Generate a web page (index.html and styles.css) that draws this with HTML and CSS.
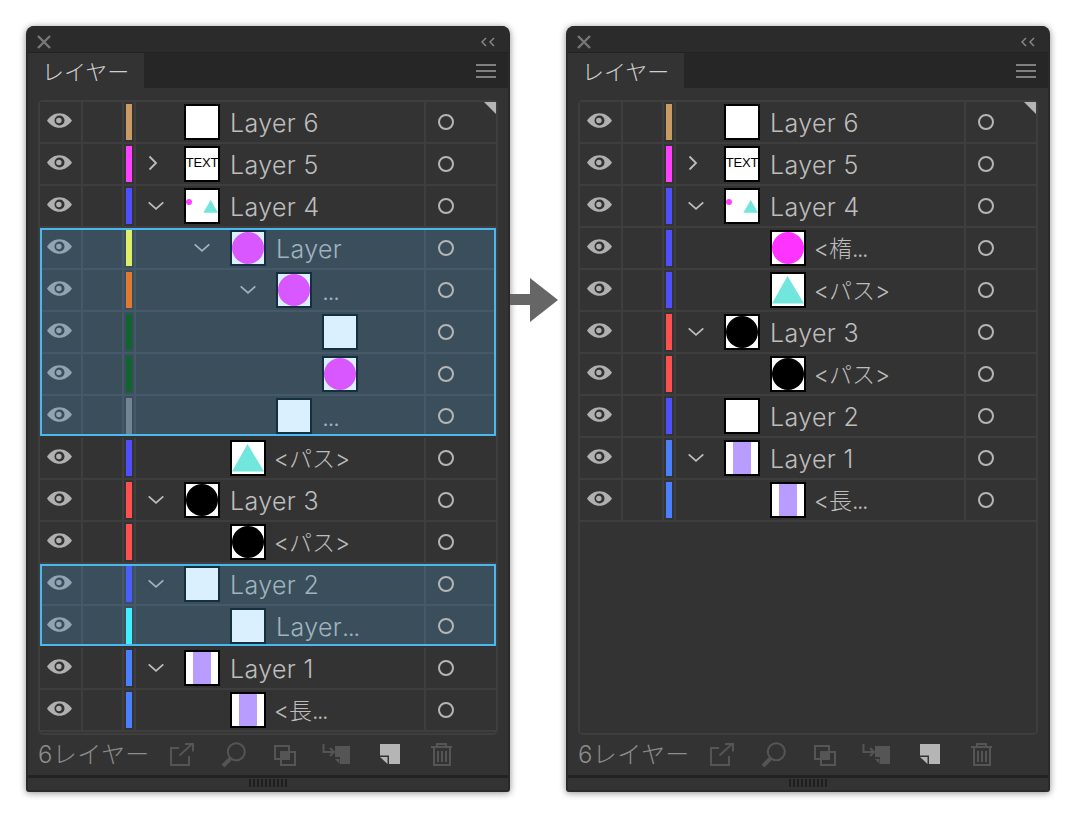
FILE: index.html
```html
<!DOCTYPE html>
<html lang="ja">

<head>
    <meta charset="UTF-8">
    <title>レイヤー</title>
    <link rel="stylesheet" href="styles.css">
</head>

<body>
    <svg class="defs" width="0" height="0">
        <symbol id="eye" viewBox="0 0 24 14">
            <path fill-rule="evenodd" d="M0 7C3 2.600 7.200 0 12 0s9 2.600 12 7c-3 4.400-7.200 7-12 7S3 11.400 0 7zM12 2.200a4.800 4.800 0 1 0 0 9.600 4.800 4.800 0 0 0 0-9.600z"/>
            <circle cx="11.400" cy="7" r="2.600"/>
        </symbol>
        <symbol id="down" viewBox="0 0 16 10">
            <path d="M.7 1.300L8 7.800l7.300-6.500" fill="none" stroke="currentColor" stroke-width="1.800"/>
        </symbol>
        <symbol id="right" viewBox="0 0 16 16">
            <path d="M4.500 1.500l6.500 6.500-6.500 6.500" fill="none" stroke="currentColor" stroke-width="1.800"/>
        </symbol>
        <symbol id="circle" viewBox="0 0 32 32"><circle cx="16" cy="16" r="16"/></symbol>
        <symbol id="triangle" viewBox="0 0 32 32"><path d="M15.500 2L32 29.500H0z"/></symbol>
        <symbol id="bar" viewBox="0 0 32 32"><path d="M7 0h18v32H7z"/></symbol>
        <symbol id="mini" viewBox="0 0 32 32"><circle cx="3" cy="12" r="3" fill="#ff40ff"/><path d="M24.700 10l7.300 12.700H17.300z" fill="#70e6dc"/></symbol>

        <symbol id="tool-export" viewBox="0 0 32 32"><path class="line" d="M13 9H5v17h18v-9M13.500 16.500L26 5M19 5h8v7.500"/></symbol>
        <symbol id="tool-search" viewBox="0 0 32 32"><circle class="line" cx="18.300" cy="12.700" r="8.500"/><path class="line thick" d="M13 19l-8 8"/></symbol>
        <symbol id="tool-mask" viewBox="0 0 32 32"><path class="solid" d="M11 13h8v7h-8z"/><path class="line" d="M5 7h14v13H5zM11 13h14v13H11z"/></symbol>
        <symbol id="tool-move" viewBox="0 0 32 32"><path class="line" d="M1.500 5v8h10M8 9l4 4-4 4"/><path class="solid" d="M13 7h15v18H18v-7h-5zM13 20h4.500v5z"/></symbol>
        <symbol id="tool-new" viewBox="0 0 32 32"><path class="solid light" d="M6 5h20v20H15V16.500H6zM6 18h7.500v7z"/></symbol>
        <symbol id="tool-trash" viewBox="0 0 32 32"><path class="line" d="M5 8h21M11 8V5h9v3M8 8v18h16V8M12 12v11M16 12v11M20 12v11"/></symbol>
    </svg>

    <div class="panel">
        <div class="titlebar">
            <svg class="close" viewBox="0 0 14 14"><path d="M1 1l12 12M13 1L1 13"/></svg>
            <svg class="collapse" viewBox="0 0 16 10"><path d="M6 1L2 5l4 4M14 1l-4 4 4 4"/></svg>
        </div>
        <div class="tabbar">
            <div class="tab">レイヤー</div>
            <div class="menu"><span></span><span></span><span></span></div>
        </div>
        <div class="content">
            <div class="list">
                <span class="corner"></span>

                <div class="row">
                    <div class="cell eye"><svg><use href="#eye"/></svg></div><div class="cell"></div>
                    <div class="cell tag"><span class="tan"></span></div>
                    <div class="cell main"><span class="twist"></span><span class="thumb"></span><span class="name">Layer 6</span></div>
                    <div class="cell target"><span></span></div>
                </div>
                <div class="row">
                    <div class="cell eye"><svg><use href="#eye"/></svg></div><div class="cell"></div>
                    <div class="cell tag"><span class="magenta"></span></div>
                    <div class="cell main"><span class="twist"><svg class="closed"><use href="#right"/></svg></span><span class="thumb thumb-text">TEXT</span><span class="name">Layer 5</span></div>
                    <div class="cell target"><span></span></div>
                </div>
                <div class="row">
                    <div class="cell eye"><svg><use href="#eye"/></svg></div><div class="cell"></div>
                    <div class="cell tag"><span class="blue"></span></div>
                    <div class="cell main"><span class="twist"><svg class="open"><use href="#down"/></svg></span><span class="thumb"><svg><use href="#mini"/></svg></span><span class="name">Layer 4</span></div>
                    <div class="cell target"><span></span></div>
                </div>

                <div class="selected">
                    <div class="row">
                        <div class="cell eye"><svg><use href="#eye"/></svg></div><div class="cell"></div>
                        <div class="cell tag"><span class="lime"></span></div>
                        <div class="cell main level-1"><span class="twist"><svg class="open"><use href="#down"/></svg></span><span class="thumb"><svg class="fill-purple"><use href="#circle"/></svg></span><span class="name">Layer</span></div>
                        <div class="cell target"><span></span></div>
                    </div>
                    <div class="row">
                        <div class="cell eye"><svg><use href="#eye"/></svg></div><div class="cell"></div>
                        <div class="cell tag"><span class="orange"></span></div>
                        <div class="cell main level-2"><span class="twist"><svg class="open"><use href="#down"/></svg></span><span class="thumb"><svg class="fill-purple"><use href="#circle"/></svg></span><span class="name"><span class="dots">...</span></span></div>
                        <div class="cell target"><span></span></div>
                    </div>
                    <div class="row">
                        <div class="cell eye"><svg><use href="#eye"/></svg></div><div class="cell"></div>
                        <div class="cell tag"><span class="green"></span></div>
                        <div class="cell main level-3"><span class="twist"></span><span class="thumb"></span></div>
                        <div class="cell target"><span></span></div>
                    </div>
                    <div class="row">
                        <div class="cell eye"><svg><use href="#eye"/></svg></div><div class="cell"></div>
                        <div class="cell tag"><span class="green"></span></div>
                        <div class="cell main level-3"><span class="twist"></span><span class="thumb"><svg class="fill-purple"><use href="#circle"/></svg></span></div>
                        <div class="cell target"><span></span></div>
                    </div>
                    <div class="row">
                        <div class="cell eye"><svg><use href="#eye"/></svg></div><div class="cell"></div>
                        <div class="cell tag"><span class="slate"></span></div>
                        <div class="cell main level-2"><span class="twist"></span><span class="thumb"></span><span class="name"><span class="dots">...</span></span></div>
                        <div class="cell target"><span></span></div>
                    </div>
                </div>

                <div class="row">
                    <div class="cell eye"><svg><use href="#eye"/></svg></div><div class="cell"></div>
                    <div class="cell tag"><span class="blue"></span></div>
                    <div class="cell main level-1"><span class="twist"></span><span class="thumb"><svg class="fill-teal"><use href="#triangle"/></svg></span><span class="name name-ja">&lt;パス&gt;</span></div>
                    <div class="cell target"><span></span></div>
                </div>
                <div class="row">
                    <div class="cell eye"><svg><use href="#eye"/></svg></div><div class="cell"></div>
                    <div class="cell tag"><span class="red"></span></div>
                    <div class="cell main"><span class="twist"><svg class="open"><use href="#down"/></svg></span><span class="thumb"><svg class="fill-black"><use href="#circle"/></svg></span><span class="name">Layer 3</span></div>
                    <div class="cell target"><span></span></div>
                </div>
                <div class="row">
                    <div class="cell eye"><svg><use href="#eye"/></svg></div><div class="cell"></div>
                    <div class="cell tag"><span class="red"></span></div>
                    <div class="cell main level-1"><span class="twist"></span><span class="thumb"><svg class="fill-black"><use href="#circle"/></svg></span><span class="name name-ja">&lt;パス&gt;</span></div>
                    <div class="cell target"><span></span></div>
                </div>

                <div class="selected">
                    <div class="row">
                        <div class="cell eye"><svg><use href="#eye"/></svg></div><div class="cell"></div>
                        <div class="cell tag"><span class="indigo"></span></div>
                        <div class="cell main"><span class="twist"><svg class="open"><use href="#down"/></svg></span><span class="thumb"></span><span class="name">Layer 2</span></div>
                        <div class="cell target"><span></span></div>
                    </div>
                    <div class="row">
                        <div class="cell eye"><svg><use href="#eye"/></svg></div><div class="cell"></div>
                        <div class="cell tag"><span class="cyan"></span></div>
                        <div class="cell main level-1"><span class="twist"></span><span class="thumb"></span><span class="name">Layer<span class="dots">...</span></span></div>
                        <div class="cell target"><span></span></div>
                    </div>
                </div>

                <div class="row">
                    <div class="cell eye"><svg><use href="#eye"/></svg></div><div class="cell"></div>
                    <div class="cell tag"><span class="sky"></span></div>
                    <div class="cell main"><span class="twist"><svg class="open"><use href="#down"/></svg></span><span class="thumb"><svg class="fill-lilac"><use href="#bar"/></svg></span><span class="name">Layer 1</span></div>
                    <div class="cell target"><span></span></div>
                </div>
                <div class="row">
                    <div class="cell eye"><svg><use href="#eye"/></svg></div><div class="cell"></div>
                    <div class="cell tag"><span class="sky"></span></div>
                    <div class="cell main level-1"><span class="twist"></span><span class="thumb"><svg class="fill-lilac"><use href="#bar"/></svg></span><span class="name name-ja">&lt;長<span class="dots">...</span></span></div>
                    <div class="cell target"><span></span></div>
                </div>
            </div>
        </div>
        <div class="footer">
            <div class="count">6レイヤー</div>
            <div class="tools">
                <svg><use href="#tool-export"/></svg>
                <svg><use href="#tool-search"/></svg>
                <svg><use href="#tool-mask"/></svg>
                <svg><use href="#tool-move"/></svg>
                <svg><use href="#tool-new"/></svg>
                <svg><use href="#tool-trash"/></svg>
            </div>
        </div>
        <div class="grip"><span></span></div>
    </div>

    <div class="arrow">
        <svg width="48" height="44" viewBox="0 0 48 44"><path d="M0 16h20V0l28 22-28 22V27H0z"/></svg>
    </div>

    <div class="panel">
        <div class="titlebar">
            <svg class="close" viewBox="0 0 14 14"><path d="M1 1l12 12M13 1L1 13"/></svg>
            <svg class="collapse" viewBox="0 0 16 10"><path d="M6 1L2 5l4 4M14 1l-4 4 4 4"/></svg>
        </div>
        <div class="tabbar">
            <div class="tab">レイヤー</div>
            <div class="menu"><span></span><span></span><span></span></div>
        </div>
        <div class="content">
            <div class="list">
                <span class="corner"></span>

                <div class="row">
                    <div class="cell eye"><svg><use href="#eye"/></svg></div><div class="cell"></div>
                    <div class="cell tag"><span class="tan"></span></div>
                    <div class="cell main"><span class="twist"></span><span class="thumb"></span><span class="name">Layer 6</span></div>
                    <div class="cell target"><span></span></div>
                </div>
                <div class="row">
                    <div class="cell eye"><svg><use href="#eye"/></svg></div><div class="cell"></div>
                    <div class="cell tag"><span class="magenta"></span></div>
                    <div class="cell main"><span class="twist"><svg class="closed"><use href="#right"/></svg></span><span class="thumb thumb-text">TEXT</span><span class="name">Layer 5</span></div>
                    <div class="cell target"><span></span></div>
                </div>
                <div class="row">
                    <div class="cell eye"><svg><use href="#eye"/></svg></div><div class="cell"></div>
                    <div class="cell tag"><span class="blue"></span></div>
                    <div class="cell main"><span class="twist"><svg class="open"><use href="#down"/></svg></span><span class="thumb"><svg><use href="#mini"/></svg></span><span class="name">Layer 4</span></div>
                    <div class="cell target"><span></span></div>
                </div>
                <div class="row">
                    <div class="cell eye"><svg><use href="#eye"/></svg></div><div class="cell"></div>
                    <div class="cell tag"><span class="blue"></span></div>
                    <div class="cell main level-1"><span class="twist"></span><span class="thumb"><svg class="fill-magenta"><use href="#circle"/></svg></span><span class="name name-ja">&lt;楕<span class="dots">...</span></span></div>
                    <div class="cell target"><span></span></div>
                </div>
                <div class="row">
                    <div class="cell eye"><svg><use href="#eye"/></svg></div><div class="cell"></div>
                    <div class="cell tag"><span class="blue"></span></div>
                    <div class="cell main level-1"><span class="twist"></span><span class="thumb"><svg class="fill-teal"><use href="#triangle"/></svg></span><span class="name name-ja">&lt;パス&gt;</span></div>
                    <div class="cell target"><span></span></div>
                </div>
                <div class="row">
                    <div class="cell eye"><svg><use href="#eye"/></svg></div><div class="cell"></div>
                    <div class="cell tag"><span class="red"></span></div>
                    <div class="cell main"><span class="twist"><svg class="open"><use href="#down"/></svg></span><span class="thumb"><svg class="fill-black"><use href="#circle"/></svg></span><span class="name">Layer 3</span></div>
                    <div class="cell target"><span></span></div>
                </div>
                <div class="row">
                    <div class="cell eye"><svg><use href="#eye"/></svg></div><div class="cell"></div>
                    <div class="cell tag"><span class="red"></span></div>
                    <div class="cell main level-1"><span class="twist"></span><span class="thumb"><svg class="fill-black"><use href="#circle"/></svg></span><span class="name name-ja">&lt;パス&gt;</span></div>
                    <div class="cell target"><span></span></div>
                </div>
                <div class="row">
                    <div class="cell eye"><svg><use href="#eye"/></svg></div><div class="cell"></div>
                    <div class="cell tag"><span class="blue"></span></div>
                    <div class="cell main"><span class="twist"></span><span class="thumb"></span><span class="name">Layer 2</span></div>
                    <div class="cell target"><span></span></div>
                </div>
                <div class="row">
                    <div class="cell eye"><svg><use href="#eye"/></svg></div><div class="cell"></div>
                    <div class="cell tag"><span class="sky"></span></div>
                    <div class="cell main"><span class="twist"><svg class="open"><use href="#down"/></svg></span><span class="thumb"><svg class="fill-lilac"><use href="#bar"/></svg></span><span class="name">Layer 1</span></div>
                    <div class="cell target"><span></span></div>
                </div>
                <div class="row">
                    <div class="cell eye"><svg><use href="#eye"/></svg></div><div class="cell"></div>
                    <div class="cell tag"><span class="sky"></span></div>
                    <div class="cell main level-1"><span class="twist"></span><span class="thumb"><svg class="fill-lilac"><use href="#bar"/></svg></span><span class="name name-ja">&lt;長<span class="dots">...</span></span></div>
                    <div class="cell target"><span></span></div>
                </div>
            </div>
        </div>
        <div class="footer">
            <div class="count">6レイヤー</div>
            <div class="tools">
                <svg><use href="#tool-export"/></svg>
                <svg><use href="#tool-search"/></svg>
                <svg><use href="#tool-mask"/></svg>
                <svg><use href="#tool-move"/></svg>
                <svg><use href="#tool-new"/></svg>
                <svg><use href="#tool-trash"/></svg>
            </div>
        </div>
        <div class="grip"><span></span></div>
    </div>
</body>

</html>
```

FILE: styles.css
```css
* {
    box-sizing: border-box;
    margin: 0;
    padding: 0;
}

body {
    display: flex;
    align-items: flex-start;
    padding: 26px;
    background: #fff;
    font-family: Inter, "Noto Sans CJK JP", sans-serif;
    font-weight: 300;
}

.defs {
    position: absolute;
}

.panel {
    flex: none;
    width: 484px;
    height: 766px;
    display: flex;
    flex-direction: column;
    background: #333;
    border: 2px solid #2a2a2a;
    border-top: 0;
    border-radius: 8px 8px 3px 3px;
    box-shadow: 0 1px 7px rgba(0, 0, 0, 0.45);
    overflow: hidden;
}

.titlebar {
    flex: none;
    height: 27px;
    display: flex;
    align-items: center;
    justify-content: space-between;
    padding: 6px 12px 0 9px;
    background: #2b2b2b;
    border-bottom: 1px solid #222;
}

.close {
    width: 14px;
    height: 14px;
    fill: none;
    stroke: #777;
    stroke-width: 2.4;
}

.collapse {
    width: 16px;
    height: 10px;
    fill: none;
    stroke: #8a8a8a;
    stroke-width: 1.4;
    margin-top: -1px;
}

.tabbar {
    flex: none;
    height: 35px;
    display: flex;
    justify-content: space-between;
    background: #262626;
}

.tab {
    width: 116px;
    padding-left: 14px;
    background: #333;
    color: #d0d0d0;
    font-size: 22px;
    line-height: 38px;
}

.menu {
    display: flex;
    flex-direction: column;
    gap: 4px;
    padding: 11px 12px 0 0;
}

.menu span {
    width: 20px;
    height: 2px;
    background: #808080;
}

.content {
    flex: none;
    height: 647px;
    padding: 12px 10px 0;
}

.list {
    position: relative;
    height: 635px;
    display: flex;
    flex-direction: column;
    gap: 2px;
    border: 2px solid #3e3e3e;
    border-radius: 5px;
}

.corner {
    position: absolute;
    top: 0;
    right: 0;
    border-top: 12px solid #b5b5b5;
    border-left: 12px solid transparent;
}

.row {
    flex: none;
    height: 40px;
    display: grid;
    grid-template-columns: 41px 39px 10px 288px 70px;
    grid-template-rows: 40px;
    column-gap: 2px;
    background: #3e3e3e;
    box-shadow: 0 2px 0 #3e3e3e;
    color: #bdbdbd;
}

.cell {
    display: flex;
    align-items: center;
    min-width: 0;
    background: #333;
}

.eye {
    justify-content: center;
    padding-bottom: 4px;
}

.eye svg {
    width: 25px;
    height: 15px;
    margin-left: -3px;
    fill: #b0b0b0;
}

.tag {
    padding: 2px;
}

.tag span {
    width: 6px;
    height: 36px;
}

.tan { background: #c89a64; }
.magenta { background: #ff40ff; }
.blue { background: #4f4fff; }
.lime { background: #dcef66; }
.orange { background: #e07a30; }
.green { background: #11632f; }
.slate { background: #718491; }
.red { background: #ff5050; }
.indigo { background: #4a5eff; }
.cyan { background: #40f0ff; }
.sky { background: #4a7fff; }

.main {
    padding-left: 12px;
}

.level-1 { padding-left: 58px; }
.level-2 { padding-left: 104px; }
.level-3 { padding-left: 150px; }

.twist {
    flex: none;
    width: 16px;
    margin-right: 20px;
    display: flex;
    color: #bdbdbd;
}

.twist .open {
    width: 16px;
    height: 10px;
}

.twist .closed {
    width: 16px;
    height: 16px;
    margin: 0 0 2px -3px;
}

.thumb {
    flex: none;
    width: 36px;
    height: 36px;
    display: flex;
    align-items: center;
    justify-content: center;
    background: #fff;
    border: 2px solid #000;
    overflow: hidden;
}

.thumb svg {
    width: 32px;
    height: 32px;
}

.thumb-text {
    padding-bottom: 3px;
    color: #000;
    font: 13px "Liberation Sans", sans-serif;
    letter-spacing: -0.2px;
}

.fill-purple { fill: #d957ff; }
.fill-magenta { fill: #ff33ff; }
.fill-teal { fill: #70e6dc; }
.fill-black { fill: #000; }
.fill-lilac { fill: #b89cff; }

.name {
    margin: 2px 0 0 10px;
    font-size: 25px;
    letter-spacing: 0.35px;
    line-height: 38px;
    white-space: nowrap;
}

.name-ja {
    margin-left: 8px;
    font-size: 23px;
    letter-spacing: 0;
}

.dots {
    letter-spacing: -1.5px;
}

.target {
    padding-left: 12px;
}

.target span {
    width: 16px;
    height: 16px;
    border: 2px solid #b5b5b5;
    border-radius: 50%;
}

.selected {
    position: relative;
    display: flex;
    flex-direction: column;
    gap: 2px;
    background: #46596a;
}

.selected::after {
    content: "";
    position: absolute;
    inset: 0;
    border: 2px solid #4ab8ee;
    pointer-events: none;
}

.selected .row {
    background: #46596a;
    box-shadow: none;
    color: #9fb3be;
}

.selected .cell {
    background: #3a4e5c;
}

.selected .eye svg {
    fill: #8fa5b0;
}

.selected .twist {
    color: #9fb3be;
}

.selected .thumb {
    background: #dbf0ff;
    border-color: #14303f;
}

.footer {
    flex: none;
    height: 40px;
    display: flex;
    align-items: center;
    padding-left: 10px;
}

.count {
    width: 118px;
    color: #8c8c8c;
    font-size: 24px;
    letter-spacing: 0.4px;
    line-height: 40px;
    white-space: nowrap;
}

.tools {
    display: flex;
}

.tools svg {
    width: 32px;
    height: 32px;
    margin: 0 10px;
}

.line {
    fill: none;
    stroke: #555;
    stroke-width: 2;
}

.line.thick {
    stroke-width: 4;
}

.solid {
    fill: #555;
}

.solid.light {
    fill: #b5b5b5;
}

.grip {
    flex: 1;
    display: flex;
    justify-content: center;
    background: #333;
    border-top: 3px solid #222;
}

.grip span {
    width: 38px;
    height: 8px;
    margin-top: 1px;
    background: repeating-linear-gradient(90deg, #1f1f1f 0 2px, #333 2px 4px);
}

.arrow {
    flex: none;
    width: 56px;
    padding-top: 252px;
}

.arrow svg {
    display: block;
    fill: #666;
}
```
